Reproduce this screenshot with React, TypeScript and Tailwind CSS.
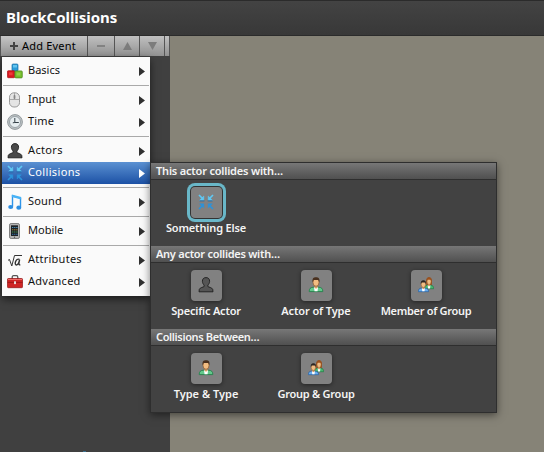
import type { ReactNode } from 'react';

function BlocksIcon() {
  return (
    <svg width="16" height="16" viewBox="0 0 16 16">
      <rect x="5" y="1" width="6" height="7" rx="1" fill="#2b9cd8" stroke="#1b6fa3" strokeWidth=".7" />
      <rect x="6" y="2" width="4" height="2.5" fill="#62c4ef" />
      <rect x="0.4" y="7.700" width="7.400" height="7" rx="1" fill="#d81820" stroke="#a80d12" strokeWidth=".7" />
      <rect x="2" y="9.300" width="3.600" height="3" fill="#ee3a3a" />
      <rect x="7.900" y="7.900" width="7.400" height="7" rx="1" fill="#74bd2d" stroke="#48851a" strokeWidth=".7" />
      <rect x="9.600" y="9.500" width="3.800" height="3" fill="#94d048" />
    </svg>
  );
}

function MouseIcon() {
  return (
    <svg width="16" height="16" viewBox="0 0 16 16">
      <rect x="2.500" y=".8" width="10" height="14.200" rx="4.400" fill="#e4e4e4" stroke="#989898" />
      <path d="M3 7.500h9.500M7.500 1v6.500" stroke="#a2a2a2" strokeWidth=".9" />
      <rect x="6.600" y="3" width="1.800" height="4" rx=".8" fill="#858585" />
    </svg>
  );
}

function ClockIcon() {
  return (
    <svg width="16" height="16" viewBox="0 0 16 16">
      <circle cx="8" cy="8" r="7.400" fill="#bfc4c6" stroke="#8a9296" strokeWidth=".9" />
      <circle cx="8" cy="8" r="5.500" fill="#e6edf0" stroke="#8c969c" strokeWidth=".8" />
      <path d="M7.800 4v4.500h4M7.800 8.500l-2 .3" fill="none" stroke="#344148" />
    </svg>
  );
}

function ActorIcon({ tone }: { tone: string }) {
  return (
    <svg width="16" height="16" viewBox="0 0 16 16">
      <path
        d="M8 .6c2.400 0 3.700 1.500 3.600 3.700-.1 1.800-.8 2.800-1.700 3.800v1.400c.8.8 4 .9 4.800 2.800l.3 2.500H1l.3-2.500c.8-1.900 4-2 4.800-2.800V8.100c-.9-1-1.600-2-1.700-3.800C4.300 2.100 5.600.6 8 .6z"
        fill={tone} stroke="#1d1d1d" strokeWidth=".9"
      />
    </svg>
  );
}

function CollideIcon() {
  return (
    <svg width="16" height="16" viewBox="0 0 16 16" fill="none">
      <g stroke="#5fc8f4" fill="#5fc8f4">
        <path d="M1 1l4 4M15 1l-4 4" strokeWidth="1.700" />
        <path d="M5.800 2v4.200H1.600zM10.200 2v4.200h4.200z" strokeWidth=".5" />
      </g>
      <g stroke="#2c93da" fill="#2c93da">
        <path d="M1 15l4-4M15 15l-4-4" strokeWidth="1.700" />
        <path d="M5.800 14V9.800H1.600zM10.200 14V9.800h4.200z" strokeWidth=".5" />
      </g>
      <path d="M1.600 6.900h4.800M9.700 6.900h4.800" stroke="#1668a8" strokeWidth=".8" />
    </svg>
  );
}

function NoteIcon() {
  return (
    <svg width="16" height="16" viewBox="0 0 16 16">
      <path d="M5.500 12.500V2l8 2.200v9" fill="none" stroke="#2e94e8" strokeWidth="1.400" />
      <path d="M4.900.4l9.300 2.700v2.500L4.900 3z" fill="#47b2f6" />
      <ellipse cx="3.700" cy="13" rx="2.500" ry="2.100" fill="#2c8ee2" />
      <ellipse cx="11.800" cy="13.700" rx="2.500" ry="2.100" fill="#2c8ee2" />
    </svg>
  );
}

function PhoneIcon() {
  return (
    <svg width="16" height="16" viewBox="0 0 16 16">
      <rect x="2.500" y=".5" width="10" height="15" rx="1.600" fill="#b4b4b4" stroke="#808080" />
      <rect x="4" y="2.300" width="7" height="10.700" fill="#1d2125" />
      <path d="M5 4.500h5.500" stroke="#4a90b8" strokeDasharray="1.300 .8" />
      <path d="M5 6.800h5.500" stroke="#b08a35" strokeDasharray="1.300 .8" />
      <path d="M5 9h5.500" stroke="#4a9b58" strokeDasharray="1.300 .8" />
      <path d="M5 11.300h5.500" stroke="#3976ae" strokeDasharray="1.300 .8" />
      <circle cx="7.500" cy="14.300" r=".7" fill="#555" />
    </svg>
  );
}

function RootIcon() {
  return (
    <svg width="16" height="16" viewBox="0 0 16 16" fill="none" stroke="#333">
      <path d="M1 8.300l1.500-.8 2.300 6.500L7.500 3.500H15" />
      <path d="M12.400 7.300c-3.600-1.500-5.400 5.400-3.200 5.700 1.500.1 2.700-2.400 3.400-5.400-.6 3-1.500 5.600.7 5.200" strokeWidth="1.400" />
    </svg>
  );
}

function ToolboxIcon() {
  return (
    <svg width="16" height="16" viewBox="0 0 16 16">
      <path d="M5.200 5V3.200c0-1 .5-1.500 1.300-1.500h3c.8 0 1.300.5 1.300 1.500V5" fill="none" stroke="#555" strokeWidth="1.300" />
      <rect x=".4" y="4.500" width="15.200" height="9.200" rx="1" fill="#ce2424" stroke="#8e1212" strokeWidth=".7" />
      <path d="M1 5.500h14" stroke="#f06b68" />
      <path d="M.5 8.400h15" stroke="#931515" strokeWidth=".8" />
      <rect x="7" y="7.300" width="2" height="2.800" fill="#e4dada" />
    </svg>
  );
}

function PersonArt({ shirt, edge, hair }: { shirt: string; edge: string; hair: string }) {
  return (
    <g>
      <path d="M1.200 14.600c0-3 1.200-4.100 4-4.400h5.600c2.800.3 4 1.400 4 4.400z" fill={shirt} stroke={edge} strokeWidth=".9" />
      <path d="M6 10.200h4l-.5 4h-3z" fill="#fff" />
      <path d="M6.600 8h2.800v2.700L8 11.700l-1.400-1z" fill="#d99b61" />
      <ellipse cx="8" cy="5.300" rx="3" ry="4" fill="#f2bd82" stroke="#8b572c" strokeWidth=".7" />
      <path d="M4.600 5.300C4 1.600 5.500.3 8 .3s4 1.300 3.400 5l-1-2.200H5.600z" fill={hair} />
    </g>
  );
}

function PersonIcon() {
  return (
    <svg width="16" height="16" viewBox="0 0 16 16">
      <PersonArt shirt="#63c98b" edge="#25804c" hair="#49301e" />
    </svg>
  );
}

function GroupIcon() {
  return (
    <svg width="16" height="16" viewBox="0 0 16 16">
      <g transform="translate(5.600 .2) scale(.68 .79)">
        <path d="M4 10C3 3 4 0 8 0s5 3 4 10z" fill="#99501e" />
        <PersonArt shirt="#48b86f" edge="#1d7941" hair="#99501e" />
      </g>
      <g transform="translate(-.6 3) scale(.75 .8)">
        <PersonArt shirt="#6aaff0" edge="#245c9f" hair="#2c2522" />
      </g>
    </svg>
  );
}

function Separator() {
  return <div className="mx-px h-[7px] pt-[3px]"><div className="h-px bg-[#a9a9a9]" /></div>;
}

function MenuRow({ icon, label, active = false }: { icon: ReactNode; label: ReactNode; active?: boolean }) {
  return (
    <div className={active
      ? 'flex h-[22px] items-center bg-linear-to-b from-[#5b91d2] to-[#1c51a5] px-[5px] text-white'
      : 'flex h-[22px] items-center px-[5px] text-[#111]'}>
      {icon}
      <span className="ml-[5px] flex-1 pb-[3px] text-[11px] leading-[19px]">{label}</span>
      <svg width="6" height="9" viewBox="0 0 6 9"><path d="M0 0l6 4.500L0 9z" fill={active ? '#fff' : '#303030'} /></svg>
    </div>
  );
}

function SectionHeader({ children }: { children: ReactNode }) {
  return (
    <div className="h-[17px] border-b border-[#2e2e2e] bg-linear-to-b from-[#777] to-[#505050] pl-[5px] text-[11px] font-semibold leading-[16px]">
      {children}
    </div>
  );
}

function Tile({ icon, label, selected = false }: { icon: ReactNode; label: ReactNode; selected?: boolean }) {
  return (
    <div className="flex w-[110px] flex-col items-center pt-[7px]">
      <div className={selected
        ? 'ml-px flex size-[31px] items-center justify-center rounded-[4px] bg-[#818181] pb-px pr-px shadow-[0_0_0_1px_#333,0_0_0_4px_#69b7c8]'
        : 'ml-px flex size-[31px] items-center justify-center rounded-[4px] bg-[#818181] pb-px pr-px shadow-[0_1px_4px_rgba(0,0,0,0.45)]'}>
        {icon}
      </div>
      <span className="mt-[2px] whitespace-nowrap text-[11px] font-semibold leading-4">{label}</span>
    </div>
  );
}

export default function App() {
  return (
    <div className="relative h-[452px] w-[544px] overflow-hidden bg-[#868377] font-['Noto_Sans','Open_Sans',sans-serif]">
      <header className="h-9 border-y border-[#2b2b2b] bg-linear-to-b from-[#434343] to-[#383838] pl-[6px] text-[15px] font-bold leading-[33px] text-white">
        <span className="tracking-[-0.05px]">BlockCollisions</span>
      </header>
      <aside className="h-[416px] w-[170px] bg-[#404040]">
        <div className="flex h-5 bg-[#555] pl-px text-[#777]">
          <div className="mr-px flex w-[86px] items-center bg-linear-to-b from-[#c6c6c6] to-[#929292] pl-[9px] text-[11px] text-black">
            <svg width="8" height="8" viewBox="0 0 8 8"><path d="M4 0v8M0 4h8" stroke="#444" strokeWidth="2" /></svg>
            <span className="ml-1 tracking-[0.2px]">Add Event</span>
          </div>
          <div className="mr-px flex w-[26px] items-center justify-center bg-linear-to-b from-[#c0c0c0] to-[#929292]"><div className="h-[2px] w-2 bg-[#828282]" /></div>
          <div className="mr-px flex w-[24px] items-center justify-center bg-linear-to-b from-[#c0c0c0] to-[#929292]"><svg width="9" height="8"><path d="M4.500 0L9 8H0z" fill="#7c7c7c" /></svg></div>
          <div className="mr-px flex w-[24px] items-center justify-center bg-linear-to-b from-[#c0c0c0] to-[#929292]"><svg width="9" height="8"><path d="M0 0h9L4.500 8z" fill="#7c7c7c" /></svg></div>
          <div className="w-1 bg-linear-to-b from-[#c0c0c0] to-[#929292]" />
        </div>
      </aside>
      <div className="absolute left-[83px] top-[451px] h-px w-[3px] bg-[#3c708e]" />

      <nav className="absolute left-[2px] top-[57px] h-[239px] w-[148px] bg-[#fafafa] py-[3px] shadow-[0_3px_8px_rgba(0,0,0,0.6)]">
        <MenuRow icon={<BlocksIcon />} label={<span>Basics</span>} />
        <Separator />
        <MenuRow icon={<MouseIcon />} label={<span>Input</span>} />
        <MenuRow icon={<ClockIcon />} label={<span className="tracking-[0.2px]">Time</span>} />
        <Separator />
        <MenuRow icon={<ActorIcon tone="#494949" />} label={<span className="tracking-[0.35px]">Actors</span>} />
        <MenuRow icon={<CollideIcon />} label={<span className="tracking-[0.35px]">Collisions</span>} active />
        <Separator />
        <MenuRow icon={<NoteIcon />} label={<span className="tracking-[0.15px]">Sound</span>} />
        <Separator />
        <MenuRow icon={<PhoneIcon />} label={<span>Mobile</span>} />
        <Separator />
        <MenuRow icon={<RootIcon />} label={<span className="tracking-[0.25px]">Attributes</span>} />
        <MenuRow icon={<ToolboxIcon />} label={<span className="tracking-[0.25px]">Advanced</span>} />
      </nav>

      <section className="absolute left-[150px] top-[162px] h-[251px] w-[347px] border border-[#2e2e2e] bg-[#424242] text-[#f4f4f4] shadow-[0_2px_8px_rgba(0,0,0,0.5)]">
        <SectionHeader><span className="tracking-[-0.19px]">This actor collides with…</span></SectionHeader>
        <div className="flex h-[66px]">
          <Tile icon={<CollideIcon />} label={<span className="tracking-[-0.15px]">Something Else</span>} selected />
        </div>
        <SectionHeader><span className="tracking-[-0.27px]">Any actor collides with…</span></SectionHeader>
        <div className="flex h-[66px]">
          <Tile icon={<ActorIcon tone="#555" />} label={<span className="tracking-[-0.2px]">Specific Actor</span>} />
          <Tile icon={<PersonIcon />} label={<span className="tracking-[-0.12px]">Actor of Type</span>} />
          <Tile icon={<GroupIcon />} label={<span className="tracking-[-0.3px]">Member of Group</span>} />
        </div>
        <SectionHeader><span className="tracking-[-0.36px]">Collisions Between…</span></SectionHeader>
        <div className="flex h-[66px]">
          <Tile icon={<PersonIcon />} label={<span>Type &amp; Type</span>} />
          <Tile icon={<GroupIcon />} label={<span className="tracking-[-0.25px]">Group &amp; Group</span>} />
        </div>
      </section>
    </div>
  );
}
